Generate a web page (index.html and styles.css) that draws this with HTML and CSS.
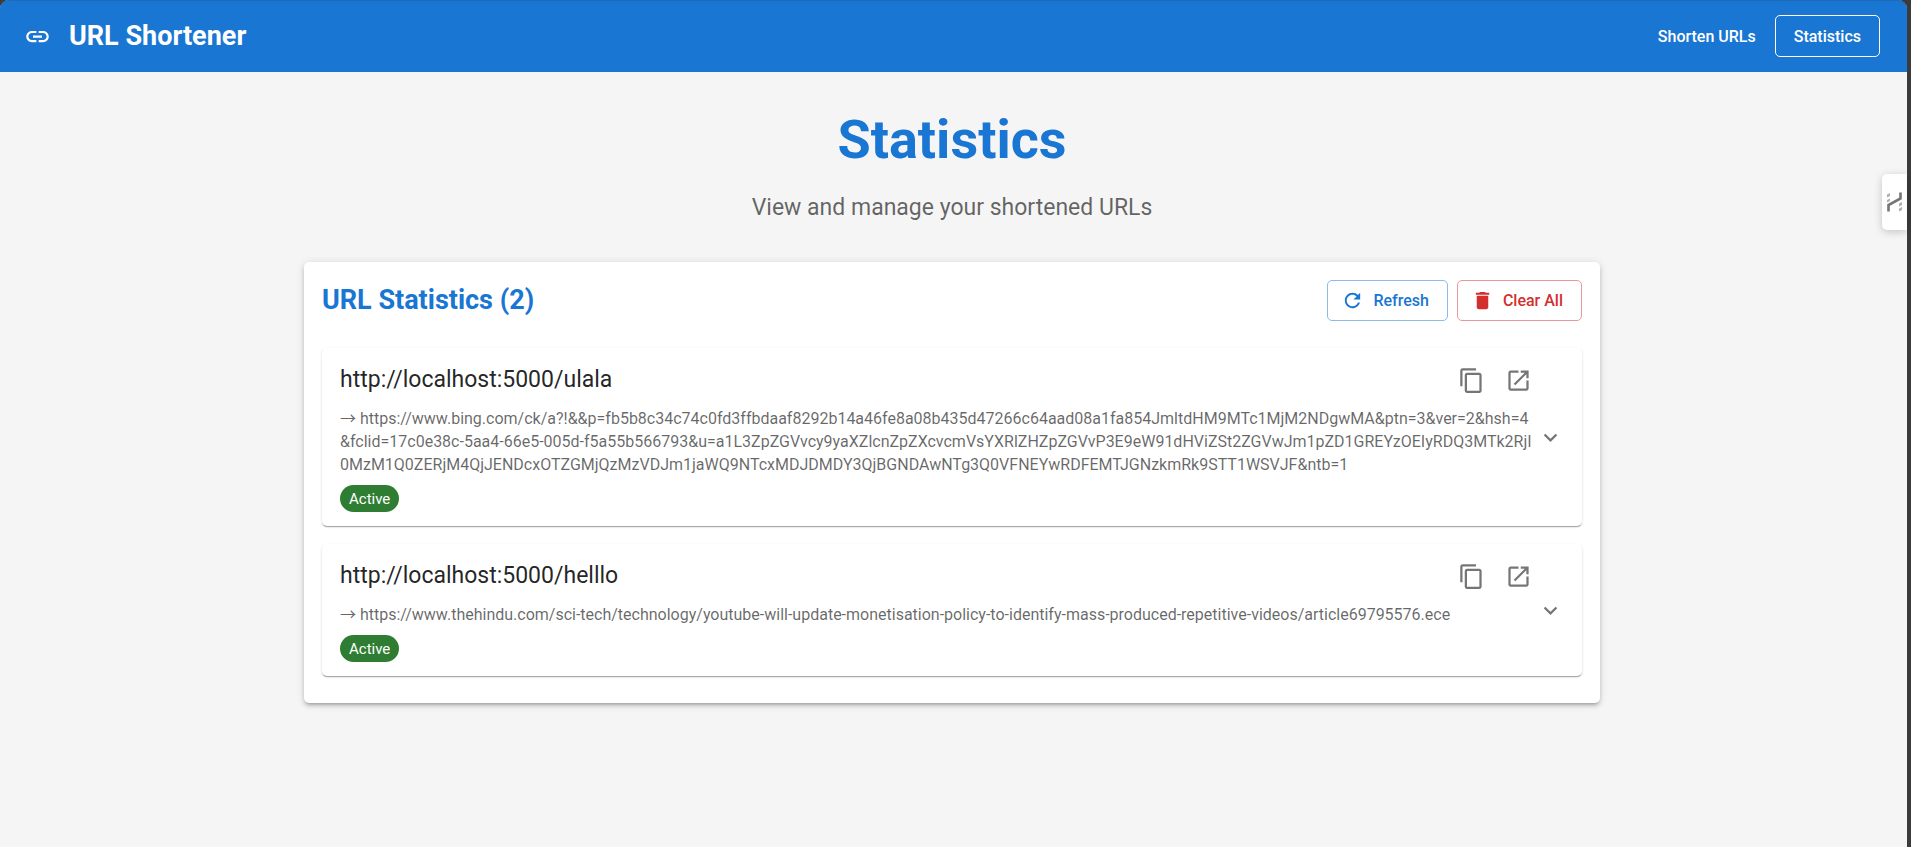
FILE: index.html
```html
<!DOCTYPE html>
<html lang="en">
<head>
<meta charset="utf-8">
<title>URL Shortener</title>
<link rel="stylesheet" href="styles.css">
</head>
<body>
<svg class="sprite" aria-hidden="true">
  <symbol id="copy" viewBox="0 0 24 24"><path d="M16 1H4c-1.100 0-2 .9-2 2v14h2V3h12V1zm3 4H8c-1.100 0-2 .9-2 2v14c0 1.100.9 2 2 2h11c1.100 0 2-.9 2-2V7c0-1.100-.9-2-2-2zm0 16H8V7h11v14z"/></symbol>
  <symbol id="open" viewBox="0 0 24 24"><path d="M19 19H5V5h7V3H5c-1.110 0-2 .9-2 2v14c0 1.100.89 2 2 2h14c1.100 0 2-.9 2-2v-7h-2v7zM14 3v2h3.590l-9.830 9.830 1.410 1.410L19 6.410V10h2V3h-7z"/></symbol>
  <symbol id="expand" viewBox="0 0 24 24"><path d="M16.590 8.590L12 13.170 7.410 8.590 6 10l6 6 6-6z"/></symbol>
</svg>
<div class="page">
  <header class="topbar">
    <svg class="icon" viewBox="0 0 24 24" aria-hidden="true"><path d="M3.900 12c0-1.710 1.390-3.100 3.100-3.100h4V7H7c-2.760 0-5 2.240-5 5s2.240 5 5 5h4v-1.900H7c-1.710 0-3.100-1.390-3.100-3.100zM8 13h8v-2H8v2zm9-6h-4v1.900h4c1.710 0 3.100 1.390 3.100 3.100s-1.390 3.100-3.100 3.100h-4V17h4c2.760 0 5-2.240 5-5s-2.240-5-5-5z"/></svg>
    <div class="brand">URL Shortener</div>
    <nav class="nav">
      <a class="nav-link" href="#shorten">Shorten URLs</a>
      <a class="nav-link nav-link-active" href="#statistics">Statistics</a>
    </nav>
  </header>
  <main class="main">
    <h1 class="title">Statistics</h1>
    <p class="subtitle">View and manage your shortened URLs</p>
    <section class="card">
      <div class="card-head">
        <h2 class="card-title">URL Statistics (2)</h2>
        <button class="btn btn-primary" type="button">
          <svg class="btn-icon" viewBox="0 0 24 24" aria-hidden="true"><path d="M17.650 6.350C16.200 4.900 14.210 4 12 4c-4.420 0-7.990 3.580-7.990 8s3.570 8 7.990 8c3.730 0 6.840-2.550 7.730-6h-2.080c-.82 2.330-3.040 4-5.650 4-3.310 0-6-2.690-6-6s2.690-6 6-6c1.660 0 3.140.69 4.220 1.780L13 11h7V4l-2.350 2.350z"/></svg>
          Refresh
        </button>
        <button class="btn btn-danger" type="button">
          <svg class="btn-icon" viewBox="0 0 24 24" aria-hidden="true"><path d="M6 19c0 1.100.9 2 2 2h8c1.100 0 2-.9 2-2V7H6v12zM19 4h-3.500l-1-1h-5l-1 1H5v2h14V4z"/></svg>
          Clear All
        </button>
      </div>
      <div class="list">
        <article class="item">
          <div class="item-body">
            <div class="item-head">
              <h3 class="short-url">http://localhost:5000/ulala</h3>
              <button class="icon-btn" type="button" aria-label="Copy"><svg class="icon"><use href="#copy"/></svg></button>
              <button class="icon-btn" type="button" aria-label="Open"><svg class="icon"><use href="#open"/></svg></button>
            </div>
            <p class="long-url">→ https://www.bing.com/ck/a?!&amp;&amp;p=fb5b8c34c74c0fd3ffbdaaf8292b14a46fe8a08b435d47266c64aad08a1fa854JmltdHM9MTc1MjM2NDgwMA&amp;ptn=3&amp;ver=2&amp;hsh=4&amp;fclid=17c0e38c-5aa4-66e5-005d-f5a55b566793&amp;u=a1L3ZpZGVvcy9yaXZlcnZpZXcvcmVsYXRlZHZpZGVvP3E9eW91dHViZSt2ZGVwJm1pZD1GREYzOEIyRDQ3MTk2RjI0MzM1Q0ZERjM4QjJENDcxOTZGMjQzMzVDJm1jaWQ9NTcxMDJDMDY3QjBGNDAwNTg3Q0VFNEYwRDFEMTJGNzkmRk9STT1WSVJF&amp;ntb=1</p>
            <span class="chip">Active</span>
          </div>
          <button class="expand" type="button" aria-label="Expand"><svg class="icon"><use href="#expand"/></svg></button>
        </article>
        <article class="item">
          <div class="item-body">
            <div class="item-head">
              <h3 class="short-url">http://localhost:5000/helllo</h3>
              <button class="icon-btn" type="button" aria-label="Copy"><svg class="icon"><use href="#copy"/></svg></button>
              <button class="icon-btn" type="button" aria-label="Open"><svg class="icon"><use href="#open"/></svg></button>
            </div>
            <p class="long-url">→ https://www.thehindu.com/sci-tech/technology/youtube-will-update-monetisation-policy-to-identify-mass-produced-repetitive-videos/article69795576.ece</p>
            <span class="chip">Active</span>
          </div>
          <button class="expand" type="button" aria-label="Expand"><svg class="icon"><use href="#expand"/></svg></button>
        </article>
      </div>
    </section>
  </main>
  <button class="side-tab" type="button" aria-label="Open side panel">
    <svg class="side-icon" viewBox="0 0 15 20" aria-hidden="true">
      <path d="M1.500 19.500v-6.500L13.500 6.500V.5" fill="none" stroke="#757575" stroke-width="2.600"/>
      <path d="M0 2.500l3-1.500v3L0 5.500zM0 8l3-1.500v2.500L0 10.500zM12 11.500l3-1.500v3l-3 1.500zM12 16.500l3-1.500v3l-3 1.500z" fill="#b0b0b0"/>
    </svg>
  </button>
</div>
</body>
</html>
```
FILE: styles.css
```css
* {
  box-sizing: border-box;
}

body {
  margin: 0;
  padding-right: 4px;
  background: #3b3b3b;
  color: rgba(0, 0, 0, 0.87);
  font-family: Roboto, "Liberation Sans", sans-serif;
  font-size: 16px;
}

h1, h2, h3, p {
  margin: 0;
}

button {
  font: inherit;
  cursor: pointer;
}

.sprite {
  position: absolute;
  width: 0;
  height: 0;
}

.page {
  position: relative;
  min-height: 100vh;
  background: #f5f5f5;
  border-radius: 9px 9px 0 0;
}

.icon {
  display: block;
  flex: none;
  width: 27px;
  height: 27px;
  fill: currentColor;
}

/* Top bar */
.topbar {
  display: flex;
  align-items: center;
  height: 72px;
  padding: 0 27px 0 24px;
  background: #1976d2;
  box-shadow: inset 0 1px 0 #1c6ab8;
  border-radius: 9px 9px 0 0;
  color: #fff;
}

.brand {
  flex: 1;
  margin-left: 18px;
  font-size: 27px;
  font-weight: 700;
  line-height: 36px;
}

.nav {
  display: flex;
  gap: 9px;
}

.nav-link {
  display: flex;
  align-items: center;
  height: 42px;
  padding: 0 9px;
  border: 1px solid transparent;
  border-radius: 5px;
  color: inherit;
  font-weight: 500;
  text-decoration: none;
}

.nav-link-active {
  padding: 0 18px;
  border-color: #fff;
}

/* Content */
.main {
  padding: 36px 27px 36px 24px;
  text-align: center;
}

.title {
  color: #1976d2;
  font-size: 54px;
  font-weight: 700;
  line-height: 63px;
}

.subtitle {
  margin: 19px 0 36px;
  color: rgba(0, 0, 0, 0.6);
  font-size: 23px;
  line-height: 36px;
}

.card {
  max-width: 1296px;
  margin: 0 auto;
  padding: 18px 18px 27px;
  background: #fff;
  border-radius: 5px;
  box-shadow: 0 3px 3px -2px rgba(0, 0, 0, 0.2), 0 3px 4px 0 rgba(0, 0, 0, 0.14), 0 1px 9px 0 rgba(0, 0, 0, 0.12);
  text-align: left;
}

.card-head {
  display: flex;
  gap: 9px;
  margin-bottom: 27px;
}

.card-title {
  flex: 1;
  color: #1976d2;
  font-size: 27px;
  font-weight: 700;
  line-height: 40px;
}

.btn {
  display: flex;
  align-items: center;
  gap: 9px;
  height: 41px;
  padding: 0 18px 0 13px;
  background: transparent;
  border: 1px solid;
  border-radius: 5px;
  font-weight: 500;
}

.btn-icon {
  width: 23px;
  height: 23px;
  fill: currentColor;
}

.btn-primary {
  border-color: #8cbbe9;
  color: #1976d2;
}

.btn-danger {
  border-color: #ea9797;
  color: #d32f2f;
}

/* URL list */
.list {
  display: grid;
  gap: 18px;
}

.item {
  display: flex;
  align-items: center;
  padding: 14px 18px;
  border-radius: 5px;
  box-shadow: 0 2px 1px -1px rgba(0, 0, 0, 0.2), 0 1px 1px 0 rgba(0, 0, 0, 0.14), 0 1px 3px 0 rgba(0, 0, 0, 0.12);
}

.item-body {
  flex: 1;
  min-width: 0;
}

.item-head {
  display: flex;
  gap: 10px;
  margin-bottom: 8px;
}

.short-url {
  flex: 1;
  font-size: 23px;
  font-weight: 400;
  line-height: 35px;
}

.icon-btn,
.expand {
  padding: 5px;
  background: none;
  border: 0;
  color: rgba(0, 0, 0, 0.54);
}

.expand {
  padding: 0;
}

.long-url {
  margin-bottom: 9px;
  color: rgba(0, 0, 0, 0.6);
  font-family: Roboto, "Noto Sans CJK JP", sans-serif;
  line-height: 23px;
  word-break: break-all;
}

.chip {
  display: flex;
  align-items: center;
  width: fit-content;
  height: 27px;
  padding: 0 9px;
  background: #2e7d32;
  border-radius: 14px;
  color: #fff;
  font-size: 15px;
}

/* Tab pinned over the right edge */
.side-tab {
  position: absolute;
  top: 174px;
  right: 0;
  display: flex;
  align-items: center;
  width: 25px;
  height: 56px;
  padding: 0 5px;
  background: #fff;
  border: 0;
  border-radius: 5px 0 0 5px;
  box-shadow: 0 2px 8px rgba(0, 0, 0, 0.2);
}

.side-icon {
  width: 15px;
  height: 20px;
}
```
